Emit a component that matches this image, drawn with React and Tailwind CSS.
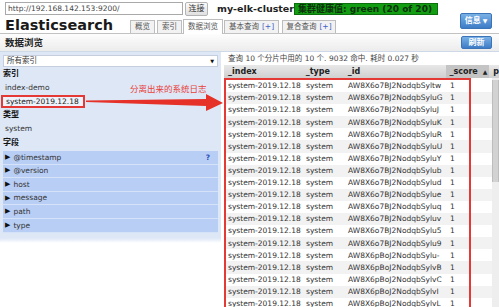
import React from "react";

const ids = [
  "AW8X6o7BJ2NodqbSyltw",
  "AW8X6o7BJ2NodqbSyluG",
  "AW8X6o7BJ2NodqbSyluJ",
  "AW8X6o7BJ2NodqbSyluK",
  "AW8X6o7BJ2NodqbSyluR",
  "AW8X6o7BJ2NodqbSyluU",
  "AW8X6o7BJ2NodqbSyluY",
  "AW8X6o7BJ2NodqbSylub",
  "AW8X6o7BJ2NodqbSylud",
  "AW8X6o7BJ2NodqbSylue",
  "AW8X6o7BJ2NodqbSyluq",
  "AW8X6o7BJ2NodqbSyluv",
  "AW8X6o7BJ2NodqbSylu5",
  "AW8X6o7BJ2NodqbSylu9",
  "AW8X6pBoJ2NodqbSylu-",
  "AW8X6pBoJ2NodqbSylvB",
  "AW8X6pBoJ2NodqbSylvC",
  "AW8X6pBoJ2NodqbSylvI",
  "AW8X6pBoJ2NodqbSylvL",
];

const fields = ["@timestamp", "@version", "host", "message", "path", "type"];

function Tab({ label, plus, active, className = "" }) {
  return (
    <div
      className={`flex items-center justify-center border border-b-0 border-[#bdbdbd] text-[7.5px] leading-none text-[#555] ${
        active ? "relative z-10 -mb-px h-[15px] bg-white" : "h-[13px] bg-[#f2f2f2]"
      } ${className}`}
    >
      {label}
      {plus && <span className="ml-[3px] text-[#3b62c4]">[+]</span>}
    </div>
  );
}

function BlueButton({ children, className = "" }) {
  return (
    <button
      type="button"
      className={`flex items-center justify-center rounded-[2px] border border-[#3c74b8] bg-linear-to-b from-[#79b0e6] to-[#3d7cc6] text-[8px] font-bold leading-none text-white ${className}`}
    >
      {children}
    </button>
  );
}

export default function App() {
  return (
    <div className="relative h-[307px] w-[499px] overflow-hidden bg-white font-['DejaVu_Sans','Noto_Sans_CJK_SC',sans-serif] text-[#333]">
      {/* top line: address and cluster */}
      <div className="flex h-[17px] items-start pl-[5px] pt-[2px]">
        <div className="flex h-[13px] w-[178px] items-center border border-[#a9a9a9] bg-white px-[2px] text-[7.5px] leading-none text-[#444]">
          http://192.168.142.153:9200/
        </div>
        <button
          type="button"
          className="ml-[2px] flex h-[14px] w-[23px] items-center justify-center rounded-[2px] border border-[#b3b3b3] bg-linear-to-b from-[#fbfbfb] to-[#e0e0e0] text-[8px] leading-none text-[#333]"
        >
          连接
        </button>
        <span className="ml-[9px] w-[77px] shrink-0 whitespace-nowrap text-[9.5px] font-bold leading-[14px] text-[#222]">
          my-elk-cluster
        </span>
        <span className="mt-px flex h-[12px] w-[144px] shrink-0 items-center whitespace-nowrap border border-[#0c6e0c] bg-[#129d12] pl-[3px] text-[9px] font-bold leading-none text-[#0e300e]">
          集群健康值: green (20 of 20)
        </span>
      </div>

      {/* title and tabs */}
      <div className="flex h-[16px] items-end">
        <div className="w-[130px] pl-[5px]">
          <h1 className="text-[14.5px] font-bold leading-[16px] text-[#1a1a1a]">Elasticsearch</h1>
        </div>
        <Tab label="概览" className="w-[25px]" />
        <Tab label="索引" className="ml-[2px] w-[25px]" />
        <Tab label="数据浏览" active className="ml-px w-[40px]" />
        <Tab label="基本查询" plus className="ml-px w-[55px]" />
        <Tab label="复合查询" plus className="ml-[3px] w-[54px]" />
        <BlueButton className="-mt-[4px] mr-[7px] ml-auto h-[16px] w-[32px] self-start">
          信息 <span className="ml-[2px] text-[6px]">▼</span>
        </BlueButton>
      </div>

      {/* section header */}
      <div className="flex h-[19px] items-center border-y border-t-[#c2c2c2] border-b-[#cdd8e8] bg-linear-to-b from-[#fdfdfd] to-[#ececec] pl-[5px]">
        <span className="text-[9.5px] font-bold leading-none text-[#222]">数据浏览</span>
        <BlueButton className="mr-[7px] ml-auto h-[13px] w-[31px]">刷新</BlueButton>
      </div>

      <div className="flex">
        {/* left filter panel */}
        <div className="w-[221px]">
          <div className="bg-[#dde7f6] pt-[3px]">
            <div className="mx-[3px] flex h-[12px] items-center justify-between border border-[#c5cede] bg-white px-[3px] text-[7.5px] leading-none text-[#333]">
              <span>所有索引</span>
              <span className="text-[5px] text-[#111]">▼</span>
            </div>
            <div className="flex h-[14px] items-center pl-[3px] text-[8px] font-bold leading-none text-[#111]">索引</div>
            <div className="flex h-[14px] items-center pl-[5px] text-[7.5px] leading-none">index-demo</div>
            <div className="ml-px flex h-[13px] w-[84px] items-center border-2 border-[#e53935] bg-[#eef3fb] pl-[3px] text-[7.5px] leading-none text-[#222]">
              system-2019.12.18
            </div>
            <div className="flex h-[14px] items-center pl-[3px] text-[8px] font-bold leading-none text-[#111]">类型</div>
            <div className="flex h-[14px] items-center pl-[5px] text-[7.5px] leading-none">system</div>
            <div className="flex h-[14px] items-center pl-[3px] text-[8px] font-bold leading-none text-[#111]">字段</div>
            <div className="mx-[3px] mt-px pb-[5px]">
              {fields.map((f, i) => (
                <div
                  key={f}
                  className="flex h-[13.6px] items-center border-b border-[#d6e2f8] bg-[#b9cef5] pl-[2px] text-[7.5px] leading-none text-[#222]"
                >
                  <span className="mr-[3px] text-[7px] text-[#111]">▶</span>
                  <span className="text-[#333]">{f}</span>
                  {i === 0 && <span className="mr-[8px] ml-auto text-[7.5px] font-bold text-[#2c4fb8]">?</span>}
                </div>
              ))}
            </div>
          </div>
          <div className="h-[5px] bg-linear-to-b from-[#dde7f6] to-white" />
        </div>

        {/* results */}
        <div className="ml-[3px] w-[275px]">
          <div className="h-[13px] pl-[4px] pt-[3px] text-[7.5px] leading-none text-[#444]">
            查询 10 个分片中用的 10 个. 9032 命中. 耗时 0.027 秒
          </div>
          <div className="flex h-[13px] items-center bg-linear-to-b from-[#e8e8e8] to-[#d0d0d0] text-[8px] font-bold leading-none text-[#222]">
            <span className="w-[82px] pl-[4px]">_index</span>
            <span className="w-[42px]">_type</span>
            <span className="w-[99px]">_id</span>
            <span className="flex h-full w-[43px] items-center bg-[#c4c4c4] pl-[3px]">
              _score <span className="ml-[5px] text-[6px]">▲</span>
            </span>
            <span className="pl-[4px]">p</span>
          </div>
          <div className="flex">
            <div className="w-[268px] pt-[2px]">
              {ids.map((id, i) => (
                <div
                  key={id}
                  className={`flex h-[12.1px] items-center text-[7.5px] leading-none text-[#333] ${
                    i % 2 ? "bg-[#f2f2f2]" : "bg-white"
                  }`}
                >
                  <span className="w-[82px] pl-[4px]">system-2019.12.18</span>
                  <span className="w-[42px]">system</span>
                  <span className="w-[99px]">{id}</span>
                  <span className="pl-[3px]">1</span>
                </div>
              ))}
            </div>
            <div className="w-[7px] bg-[#eeeeee] pt-[2px]">
              <div className="h-[102px] border-x border-[#bdbdbd] bg-[#d2d2d2]" />
            </div>
          </div>
        </div>
      </div>

      {/* annotation */}
      <span className="absolute left-[130px] top-[84px] text-[8.5px] leading-[10px] text-[#e8413a]">
        分离出来的系统日志
      </span>
      <svg className="absolute left-[84px] top-[92px]" width="142" height="22" viewBox="0 0 142 22">
        <polygon points="2,8.5 122,7 122,2 139,11 122,19 122,14 2,10" fill="#e53127" />
      </svg>
      <div className="pointer-events-none absolute left-[224px] top-[78px] h-[240px] w-[247px] border-2 border-[#e53935]" />
    </div>
  );
}
